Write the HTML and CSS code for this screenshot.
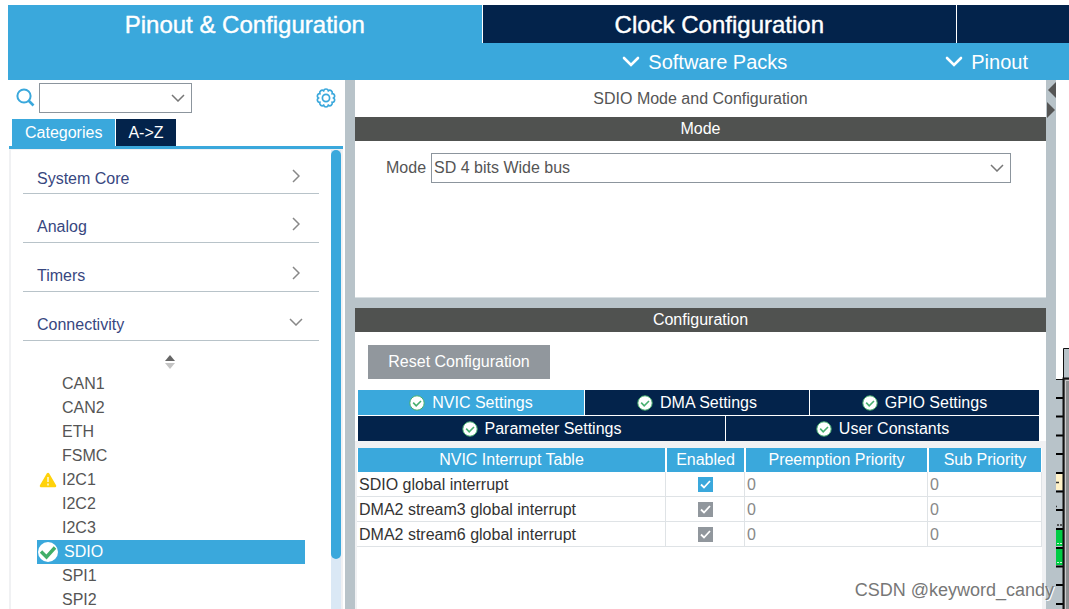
FILE: index.html
```html
<!DOCTYPE html>
<html lang="en">
<head>
<meta charset="utf-8">
<title>Pinout &amp; Configuration</title>
<link rel="stylesheet" href="styles.css">
</head>
<body>
<svg class="defs" aria-hidden="true">
  <symbol id="down" viewBox="0 0 14 8"><path d="M1 1l6 6 6-6" fill="none" stroke="currentColor" stroke-width="1.5"/></symbol>
  <symbol id="right" viewBox="0 0 8 14"><path d="M1 1l6 6-6 6" fill="none" stroke="currentColor" stroke-width="1.5"/></symbol>
  <symbol id="bold-down" viewBox="0 0 18 12"><path d="M2 2l7 7 7-7" fill="none" stroke="currentColor" stroke-width="2.6" stroke-linecap="round"/></symbol>
  <symbol id="ok" viewBox="0 0 16 16"><circle cx="8" cy="8" r="7.2" fill="#fff" stroke="#48b06f" stroke-width="1"/><path d="M4.2 7.6l3 3.2 4.8-4.8" fill="none" stroke="#48b06f" stroke-width="1.6"/></symbol>
</svg>

<nav class="main-tabs">
  <button class="main-tab active">Pinout &amp; Configuration</button>
  <button class="main-tab">Clock Configuration</button>
  <button class="main-tab short" aria-label="Project Manager"></button>
</nav>
<div class="subbar">
  <button class="menu"><svg width="18" height="12"><use href="#bold-down"/></svg>Software Packs</button>
  <button class="menu"><svg width="18" height="12"><use href="#bold-down"/></svg>Pinout</button>
</div>

<main class="workspace">
  <aside class="sidebar">
    <div class="search">
      <svg width="20" height="20" viewBox="0 0 20 20" fill="none" stroke="#3aa8dc"><circle cx="8" cy="8" r="6.600" stroke-width="2"/><path d="M12.500 12.500l5 5" stroke-width="2.600"/></svg>
      <div class="combo search-combo">
        <select aria-label="Search"><option></option></select>
        <svg width="14" height="8"><use href="#down"/></svg>
      </div>
      <button class="gear" aria-label="Settings">
        <svg width="22" height="22" viewBox="-11 -11 22 22" fill="none" stroke="#3aa8dc" stroke-width="1.700">
          <circle r="3.600"/>
          <path d="M7.600 0A2.450 2.450 0 0 1 6.150 4.470A2.450 2.450 0 0 1 2.350 7.230A2.450 2.450 0 0 1-2.350 7.230A2.450 2.450 0 0 1-6.150 4.470A2.450 2.450 0 0 1-7.600 0A2.450 2.450 0 0 1-6.150-4.470A2.450 2.450 0 0 1-2.350-7.230A2.450 2.450 0 0 1 2.350-7.230A2.450 2.450 0 0 1 6.150-4.470A2.450 2.450 0 0 1 7.600 0z"/>
        </svg>
      </button>
    </div>
    <div class="side-tabs">
      <button class="side-tab active">Categories</button>
      <button class="side-tab">A-&gt;Z</button>
    </div>
    <div class="side-body">
      <div class="tree">
        <button class="group">System Core<span class="mark"><svg width="8" height="14"><use href="#right"/></svg></span></button>
        <button class="group">Analog<span class="mark"><svg width="8" height="14"><use href="#right"/></svg></span></button>
        <button class="group">Timers<span class="mark"><svg width="8" height="14"><use href="#right"/></svg></span></button>
        <button class="group">Connectivity<span class="mark"><svg width="14" height="8"><use href="#down"/></svg></span></button>
        <button class="sort" aria-label="Sort"><svg width="10" height="14" viewBox="0 0 10 14"><path d="M0 6l5-6 5 6z" fill="#666"/><path d="M0 8l5 6 5-6z" fill="#c4c4c4"/></svg></button>
        <ul class="items">
          <li><span class="state"></span>CAN1</li>
          <li><span class="state"></span>CAN2</li>
          <li><span class="state"></span>ETH</li>
          <li><span class="state"></span>FSMC</li>
          <li><span class="state"><svg width="18" height="16" viewBox="0 0 18 16"><path d="M9 2L2 14h14z" fill="#ffd20a" stroke="#ffd20a" stroke-width="2.500" stroke-linejoin="round"/><path d="M9 5v5M9 11.500v2" stroke="#fff" stroke-width="1.300"/></svg></span>I2C1</li>
          <li><span class="state"></span>I2C2</li>
          <li><span class="state"></span>I2C3</li>
          <li class="selected"><span class="state"><svg width="22" height="22" viewBox="0 0 22 22"><circle cx="11" cy="11" r="10" fill="#fff"/><path d="M4 10.500l5.500 5.500 8.500-9.500" fill="none" stroke="#42ae68" stroke-width="3.400"/></svg></span>SDIO</li>
          <li><span class="state"></span>SPI1</li>
          <li><span class="state"></span>SPI2</li>
        </ul>
      </div>
      <div class="scroll"><div class="thumb"></div></div>
    </div>
  </aside>
  <div class="divider"></div>

  <section class="center">
    <div class="mode-panel">
      <h1 class="title">SDIO Mode and Configuration</h1>
      <h2 class="bar">Mode</h2>
      <div class="mode-row">
        <label for="mode">Mode</label>
        <div class="combo mode-combo">
          <select id="mode"><option>SD 4 bits Wide bus</option></select>
          <svg width="14" height="8"><use href="#down"/></svg>
        </div>
      </div>
    </div>
    <div class="config-panel">
      <h2 class="bar">Configuration</h2>
      <div class="actions"><button class="reset">Reset Configuration</button></div>
      <div class="config-tabs">
        <div class="tab-row top">
          <button class="tab active"><svg width="16" height="16"><use href="#ok"/></svg>NVIC Settings</button>
          <button class="tab"><svg width="16" height="16"><use href="#ok"/></svg>DMA Settings</button>
          <button class="tab"><svg width="16" height="16"><use href="#ok"/></svg>GPIO Settings</button>
        </div>
        <div class="tab-row bottom">
          <button class="tab"><svg width="16" height="16"><use href="#ok"/></svg>Parameter Settings</button>
          <button class="tab"><svg width="16" height="16"><use href="#ok"/></svg>User Constants</button>
        </div>
      </div>
      <div class="table-area">
        <table>
          <colgroup><col class="c1"><col class="c2"><col class="c3"><col class="c4"></colgroup>
          <thead><tr><th>NVIC Interrupt Table</th><th>Enabled</th><th>Preemption Priority</th><th>Sub Priority</th></tr></thead>
          <tbody>
            <tr><td>SDIO global interrupt</td><td><input type="checkbox" checked aria-label="Enable SDIO global interrupt"></td><td>0</td><td>0</td></tr>
            <tr><td>DMA2 stream3 global interrupt</td><td><input type="checkbox" checked disabled aria-label="Enable DMA2 stream3 global interrupt"></td><td>0</td><td>0</td></tr>
            <tr><td>DMA2 stream6 global interrupt</td><td><input type="checkbox" checked disabled aria-label="Enable DMA2 stream6 global interrupt"></td><td>0</td><td>0</td></tr>
          </tbody>
        </table>
      </div>
    </div>
  </section>

  <div class="divider">
    <svg width="10" height="40" viewBox="0 0 10 40" fill="#555"><path d="M2 10l8-8v16zM1 22l8 8-8 8z"/></svg>
  </div>
  <div class="chip">
    <svg width="13" height="529" viewBox="0 0 13 529">
      <path d="M0 299h13v230H0z" fill="#b8c3c9"/>
      <path d="M7.500 268.500H14V299H7.500z" fill="#b8c3c9" stroke="#111"/>
      <path d="M0 394h7v16H0z" fill="#fff2c8"/>
      <path d="M0 450h7v16H0zM0 469h7v16H0z" fill="#00cc44"/>
      <path d="M0 299.500h7" stroke="#111"/>
      <path d="M0 318h7M0 336.500h7M0 355.500h7M0 374h7M0 393h7M0 411.500h7M0 430h7M0 449h7M0 468h7M0 486.500h7M0 505h7M0 524h7" stroke="#000" stroke-width="2"/>
      <path d="M0 402.500h3M0 426.500h1M1 445h2M4 445h2" stroke="#333" stroke-width="1.500"/>
      <path d="M1 463.500h2M4 463.500h2M1 482.500h2M4 482.500h2" stroke="#d5f5df"/>
      <path d="M8 299h5v230H8z" fill="#8c8f91"/>
      <path d="M13 298.500H7.500V529" fill="none" stroke="#111" stroke-width="2"/>
      <path d="M13 300.500H9.500V529" fill="none" stroke="#ccc"/>
    </svg>
  </div>
</main>
<div class="watermark">CSDN @keyword_candy</div>
</body>
</html>
```
FILE: styles.css
```css
* { box-sizing: border-box; }
body {
  margin: 0;
  padding: 5px 0 0 8px;
  height: 100vh;
  overflow: hidden;
  display: flex;
  flex-direction: column;
  background: #fff;
  color: #555;
  font: 16px/24px "Liberation Sans", Arial, sans-serif;
}
button, select {
  font: inherit;
  color: inherit;
  border: 0;
  border-radius: 0;
  padding: 0;
  background: none;
}
h1, h2, ul { margin: 0; padding: 0; font-size: 16px; font-weight: 400; }
svg { display: block; flex: none; }
.defs { position: absolute; width: 0; height: 0; }

.main-tabs { display: flex; gap: 1px; flex: none; }
.main-tab {
  flex: 474 1 0;
  height: 38px;
  padding-top: 2px;
  background: #03234b;
  color: #fff;
  font-size: 24px;
  -webkit-text-stroke: 0.400px #fff;
}
.main-tab.short { flex-grow: 112; }
.main-tab.active, .subbar, .tab.active, .side-tab.active { background: #3aa8dc; }
.subbar {
  flex: none;
  height: 37px;
  display: flex;
  justify-content: flex-end;
  gap: 156px;
  padding-right: 41px;
  color: #fff;
}
.menu { display: flex; align-items: center; gap: 8px; font-size: 20px; }
.menu:first-child { margin-right: 2px; }

.workspace {
  flex: 1;
  min-height: 0;
  display: grid;
  grid-template-columns: 337px 10px 1fr 10px 13px;
  grid-template-rows: 100%;
}
.divider { background: #b8c3c9; }
.chip { overflow: hidden; }

.sidebar { display: flex; flex-direction: column; min-height: 0; }
.search { display: flex; align-items: center; padding: 3px 8px 6px; gap: 3px; }
.combo { display: grid; align-items: center; border: 1px solid #8c959d; color: #777; }
.combo select, .combo svg { grid-area: 1 / 1; }
.combo select { appearance: none; width: 100%; height: 28px; padding-left: 2px; color: #555; }
.combo svg { justify-self: end; margin-right: 6px; pointer-events: none; }
.search-combo { width: 153px; }
.gear { margin-left: auto; }
.side-tabs { display: flex; gap: 1px; margin-left: 1px; padding-left: 3px; border-bottom: 3px solid #3aa8dc; margin-right: 2px; }
.side-tab { height: 27px; padding: 0 12px; color: #fff; background: #03234b; }
.side-tab.active { padding: 0 13px; }
.side-body { flex: 1; min-height: 0; display: flex; margin: 0 2px 0 1px; border: solid #f0f1f3; border-width: 1px 2px 0; overflow: hidden; }
.tree { flex: 1; padding: 0 12px; }
.group {
  display: flex;
  width: 100%;
  height: 45px;
  margin-bottom: 4px;
  padding: 17px 16px 0 14px;
  justify-content: space-between;
  border-bottom: 1px solid #b8c3c9;
  color: #38477f;
}
.group:first-child { height: 44px; }
.mark { width: 14px; height: 18px; display: grid; place-items: center; color: #888; }
.sort { display: block; margin: 14px auto 3px; padding-right: 2px; }
.items { list-style: none; margin: 0 14px; }
.items li { display: flex; align-items: center; height: 24px; }
.items .state { width: 25px; display: grid; justify-content: start; align-items: center; }
.items .state svg[width="18"] { margin-left: 2px; }
.items .selected { background: #3aa8dc; color: #fff; }
.items .selected .state { width: 27px; }
.scroll { width: 10px; background: #dae8f5; }
.thumb { height: 89%; background: #3aa8dc; border-radius: 5px; }

.center { display: flex; flex-direction: column; min-width: 0; }
.mode-panel { min-height: 218px; border-bottom: 1px solid #d8dfe2; }
.title { height: 37px; line-height: 37px; text-align: center; }
.bar { height: 24px; background: #505250; color: #fff; text-align: center; }
.mode-row { display: flex; align-items: center; gap: 5px; padding: 12px 35px 0 31px; }
.mode-combo { flex: 1; }
.config-panel { flex: 1; display: flex; flex-direction: column; border-top: 10px solid #b8c3c9; }
.actions { padding: 13px 13px 11px; }
.reset { width: 182px; height: 34px; background: #91979d; color: #fff; }
.config-tabs { padding: 0 7px 0 3px; }
.tab-row { display: grid; gap: 1px; }
.tab-row.top { grid-template-columns: 226fr 224fr 229fr; margin-bottom: 1px; }
.tab-row.bottom { grid-template-columns: 367fr 313fr; }
.tab { display: flex; justify-content: center; align-items: center; gap: 7px; height: 25px; background: #03234b; color: #fff; }
.table-area { flex: 1; border: solid #f0f1f3; border-width: 7px 4px 0 2px; }
table { width: 100%; table-layout: fixed; border-collapse: separate; border-spacing: 0; }
.c2 { width: 79px; }
.c3 { width: 183px; }
.c4 { width: 114px; }
th { height: 24px; padding: 0; font-weight: 400; color: #fff; background: #3aa8dc; border: solid #fff; border-width: 0 1px; }
td { height: 25px; padding: 1px 1px 0 2px; line-height: 23px; color: #333; border: solid #dfe3e6; border-width: 0 1px 1px 0; }
td:nth-child(2) { text-align: center; }
td:nth-child(n+3) { color: #888; }
input[type="checkbox"] {
  appearance: none;
  display: block;
  width: 15px;
  height: 15px;
  margin: 0 auto;
  background: #3aa8dc url("data:image/svg+xml,%3Csvg xmlns='http://www.w3.org/2000/svg' viewBox='0 0 15 15'%3E%3Cpath d='M3 7.500l3 3 6-6.500' fill='none' stroke='white' stroke-width='1.800'/%3E%3C/svg%3E");
}
input[type="checkbox"]:disabled { background-color: #91979d; }
.watermark { position: absolute; right: 15px; bottom: 7px; font-size: 18px; color: #777; text-shadow: 1px 1px 0 #fff; }
```
